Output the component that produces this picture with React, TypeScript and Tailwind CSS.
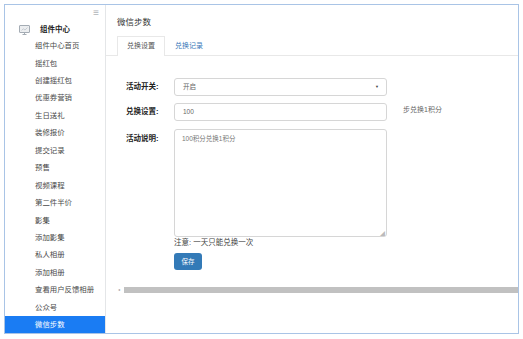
const font = { fontFamily: '"Liberation Sans", "Noto Sans CJK SC", sans-serif' };

const menu = [
  "组件中心首页",
  "摇红包",
  "创建摇红包",
  "优惠券营销",
  "生日送礼",
  "装修报价",
  "提交记录",
  "预售",
  "视频课程",
  "第二件半价",
  "影集",
  "添加影集",
  "私人相册",
  "添加相册",
  "查看用户反馈相册",
  "公众号",
];

function MonitorIcon() {
  return (
    <svg width="11" height="10" viewBox="0 0 11 10" fill="none">
      <rect x="0.5" y="0.5" width="10" height="7" rx="0.5" stroke="#a4acb4" fill="#eceef0" />
      <path d="M2.5 5.5 L4.3 3.8 L6 5 L8.5 2.5" stroke="#bcc3ca" strokeWidth="0.8" />
      <path d="M3.5 9.5 H7.5 M5.5 7.5 V9.5" stroke="#a4acb4" />
    </svg>
  );
}

function Sidebar() {
  return (
    <aside className="w-[101px] shrink-0 border-r border-[#e4e6e8] bg-white flex flex-col">
      <div className="h-[19px] flex justify-end pr-[6px] pt-[3px] text-[#b0b4b8] text-[10px] leading-none">≡</div>
      <div className="flex items-center h-[16px] pl-[14px] mt-[3px]">
        <MonitorIcon />
        <span className="ml-[10px] text-[7.5px] font-bold text-[#222]">组件中心</span>
      </div>
      <ul className="mt-[1px]">
        {menu.map((m) => (
          <li key={m} className="h-[17.45px] flex items-center pl-[30px] text-[7.4px] text-[#4a4a4a] whitespace-nowrap">
            {m}
          </li>
        ))}
        <li className="h-[17px] flex items-center pl-[30px] text-[7.4px] text-white bg-[#1a7cf3]">微信步数</li>
      </ul>
    </aside>
  );
}

function Main() {
  return (
    <main className="flex-1 min-w-0 bg-white flex flex-col">
      <div className="pl-[11px] pt-[11px] text-[8.5px] text-[#333] h-[31px]">微信步数</div>
      <div className="flex border-b border-[#e8e8e8] pl-[11px] h-[20px]">
        <div className="px-[9px] h-[20px] flex items-center border border-b-0 border-[#e8e8e8] bg-white -mb-px text-[7px] text-[#555]">
          兑换设置
        </div>
        <div className="px-[10px] h-[20px] flex items-center text-[7px] text-[#3a78b8]">兑换记录</div>
      </div>
      <div className="pt-[22px] pl-[20px]">
        <div className="flex items-center h-[18px]">
          <label className="w-[48px] text-[7.5px] font-bold text-[#222]">活动开关:</label>
          <div className="w-[213px] h-[18px] border border-[#d6d6d6] rounded-[3px] flex items-center justify-between pl-[8px] pr-[7px]">
            <span className="text-[6.5px] text-[#666]">开启</span>
            <span className="text-[4px] text-[#444]">▼</span>
          </div>
        </div>
        <div className="flex items-center h-[18px] mt-[7px]">
          <label className="w-[48px] text-[7.5px] font-bold text-[#222]">兑换设置:</label>
          <div className="w-[213px] h-[18px] border border-[#d6d6d6] rounded-[3px] flex items-center px-[8px] text-[6.5px] text-[#666]">
            100
          </div>
          <span className="ml-[16px] text-[7px] text-[#666] -mt-[4px]">步兑换1积分</span>
        </div>
        <div className="flex mt-[8px]">
          <label className="w-[48px] text-[7.5px] font-bold text-[#222] pt-[4px]">活动说明:</label>
          <div>
            <div className="relative w-[213px] h-[108px] border border-[#d6d6d6] rounded-[3px] px-[7px] pt-[4px] text-[6.5px] text-[#777]">
              100积分兑换1积分
              <span className="absolute right-[1px] bottom-0 text-[5px] leading-none text-[#bbb]">◢</span>
            </div>
            <div className="mt-[1px] text-[7.5px] text-[#444] leading-[10px]">注意: 一天只能兑换一次</div>
            <button className="mt-[5px] w-[28px] h-[17px] rounded-[3px] bg-[#337ab7] text-white text-[6.5px] flex items-center justify-center">
              保存
            </button>
          </div>
        </div>
      </div>
      <div className="mt-[17px] ml-[12px] flex items-center h-[6px]">
        <span className="w-[6px] text-[4px] text-[#999] leading-none">◂</span>
        <div className="flex-1 h-[6px] bg-[#c1c1c1]" />
      </div>
    </main>
  );
}

export default function App() {
  return (
    <div className="w-[523px] h-[339px] bg-white p-[4px] pb-[5px]" style={font}>
      <div className="w-full h-full border border-[#a9c4e6] flex overflow-hidden">
        <Sidebar />
        <Main />
      </div>
    </div>
  );
}
